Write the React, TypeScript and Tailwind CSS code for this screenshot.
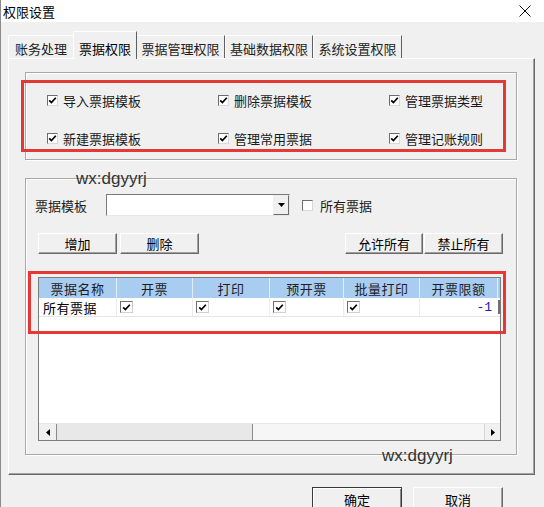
import React from 'react'

function CheckBox({ checked }: { checked: boolean }) {
  return (
    <span className="flex h-[11px] w-[11px] shrink-0 items-center justify-center border border-t-[#6d6d6d] border-l-[#6d6d6d] border-r-[#d8d8d8] border-b-[#d8d8d8] bg-white">
      {checked && (
        <svg width="9" height="9" viewBox="0 0 9 9">
          <path d="M1.2 4.3 L3.4 6.6 L7.8 1.8" fill="none" stroke="#000" strokeWidth="1.7" />
        </svg>
      )}
    </span>
  )
}

function Button({ label, className }: { label: string; className: string }) {
  return (
    <div
      className={`flex items-center justify-center border border-t-white border-l-white border-r-[#6a6a6a] border-b-[#6a6a6a] bg-[#f0f0f0] text-[13px] text-black shadow-[inset_-1px_-1px_0_#a0a0a0] ${className}`}
    >
      {label}
    </div>
  )
}

const headers = [
  { label: '票据名称', w: 'w-[78px]' },
  { label: '开票', w: 'w-[76px]' },
  { label: '打印', w: 'w-[77px]' },
  { label: '预开票', w: 'w-[74px]' },
  { label: '批量打印', w: 'w-[76px]' },
  { label: '开票限额', w: 'w-[78px]' },
]

const perms = ['导入票据模板', '删除票据模板', '管理票据类型', '新建票据模板', '管理常用票据', '管理记账规则']

export default function App() {
  return (
    <div className="relative h-[507px] w-[544px] overflow-hidden border-l border-[#8c8c8c] bg-[#f0f0f0] font-['Noto_Sans_CJK_SC',sans-serif] text-[13px] leading-none text-black">
      {/* title bar */}
      <div className="flex h-[22px] items-center justify-between bg-white pl-[2px] pr-[13px]">
        <span className="text-[13px]">权限设置</span>
        <svg width="12" height="12" viewBox="0 0 12 12">
          <path d="M0.5 0.5 L11.5 11.5 M11.5 0.5 L0.5 11.5" stroke="#111" strokeWidth="1" />
        </svg>
      </div>

      {/* tabs */}
      <div className="flex h-[36px] items-end pl-[7px]">
        <div className="flex h-[23px] w-[65px] items-center justify-center border-l border-t border-white pt-[2px] text-[#222]">账务处理</div>
        <div className="relative z-10 -mb-px flex h-[28px] w-[64px] items-center justify-center border-l border-t border-white border-r border-r-[#5f5f5f] bg-[#f0f0f0] pt-[6px]">票据权限</div>
        <div className="flex h-[23px] w-[88px] items-center justify-center border-t border-white border-r border-r-[#5f5f5f] pt-[2px] text-[#222]">票据管理权限</div>
        <div className="flex h-[23px] w-[88px] items-center justify-center border-l border-t border-white border-r border-r-[#5f5f5f] pt-[2px] text-[#222]">基础数据权限</div>
        <div className="flex h-[23px] w-[89px] items-center justify-center border-l border-t border-white border-r border-r-[#5f5f5f] pt-[2px] text-[#222]">系统设置权限</div>
      </div>

      {/* tab panel */}
      <div className="ml-[7px] h-[417px] w-[527px] border-l border-t border-white border-r border-b border-r-[#6a6a6a] border-b-[#6a6a6a] pl-[16px] pt-[13px] shadow-[inset_-1px_-1px_0_#a0a0a0]">
        {/* permissions group */}
        <div className="h-[88px] w-[492px] border border-[#a8a8a8] shadow-[inset_1px_1px_0_#fff,1px_1px_0_#fff]">
          <div className="grid grid-cols-[171px_171px_1fr] gap-y-[18px] pl-[21px] pt-[17px]">
            {perms.map((p) => (
              <div key={p} className="flex h-[20px] items-center gap-[5px] text-[#1a1a1a]">
                <CheckBox checked />
                <span>{p}</span>
              </div>
            ))}
          </div>
        </div>

        {/* template group */}
        <div className="relative mt-[18px] h-[277px] w-[492px] border border-[#a8a8a8] shadow-[inset_1px_1px_0_#fff,1px_1px_0_#fff]">
          <div className="flex h-[22px] items-center pl-[9px] mt-[15px]">
            <span className="w-[71px] text-[#1a1a1a]">票据模板</span>
            <div className="flex h-[22px] w-[184px] border border-t-[#7a7a7a] border-l-[#7a7a7a] border-r-[#e6e6e6] border-b-[#e6e6e6] bg-white">
              <div className="flex-1" />
              <div className="flex w-[16px] items-center justify-center border border-t-[#f0f0f0] border-l-[#f0f0f0] border-r-[#6a6a6a] border-b-[#6a6a6a] bg-[#f0f0f0]">
                <svg width="7" height="4" viewBox="0 0 7 4">
                  <path d="M0 0 H7 L3.5 4 Z" fill="#000" />
                </svg>
              </div>
            </div>
            <div className="ml-[12px] flex items-center gap-[7px]">
              <CheckBox checked={false} />
              <span className="text-[#1a1a1a]">所有票据</span>
            </div>
          </div>

          <div className="mt-[17px] flex h-[21px] justify-between pl-[12px] pr-[13px]">
            <div className="flex gap-[3px]">
              <Button label="增加" className="h-[21px] w-[79px]" />
              <Button label="删除" className="h-[21px] w-[79px]" />
            </div>
            <div className="flex gap-[1px]">
              <Button label="允许所有" className="h-[21px] w-[78px]" />
              <Button label="禁止所有" className="h-[21px] w-[79px]" />
            </div>
          </div>

          {/* list */}
          <div className="ml-[12px] mt-[23px] flex h-[164px] w-[463px] flex-col border border-[#7c7c7c] bg-white">
            <div className="flex h-[20px] bg-[#a9cdf0]">
              {headers.map((h) => (
                <div key={h.label} className={`flex shrink-0 items-center justify-center border-r border-[#e4eefa] tracking-[0.5px] text-[#1c1c2c] ${h.w}`}>
                  {h.label}
                </div>
              ))}
              <div className="w-[2px] bg-[#a9cdf0]" />
            </div>
            <div className="flex h-[19px] border-b border-[#e6e6e6]">
              <div className="flex w-[78px] shrink-0 items-center border-r border-[#ececec] pl-[4px] tracking-[0.5px]">所有票据</div>
              {['w-[76px]', 'w-[77px]', 'w-[74px]', 'w-[76px]'].map((w) => (
                <div key={w} className={`flex shrink-0 items-center border-r border-[#ececec] pl-[3px] ${w}`}>
                  <span className="flex h-[12px] w-[13px] items-center justify-center border border-t-[#707070] border-l-[#707070] border-r-[#d0d0d0] border-b-[#d0d0d0] bg-white">
                    <svg width="9" height="9" viewBox="0 0 9 9">
                      <path d="M1.2 4.3 L3.4 6.6 L7.8 1.8" fill="none" stroke="#000" strokeWidth="1.7" />
                    </svg>
                  </span>
                </div>
              ))}
              <div className="flex w-[78px] shrink-0 items-center justify-end pr-[6px] font-['Liberation_Mono',monospace] text-[13px] text-[#2020c0]">-1</div>
              <div className="my-[2px] w-[2px] bg-[#707070]" />
            </div>
            <div className="flex-1" />
            <div className="flex h-[17px] border-t border-[#e8e8e8] bg-[#f6f6f6]">
              <div className="flex w-[18px] items-center justify-center border-r border-[#8a8a8a] bg-[#f0f0f0]">
                <svg width="4" height="7" viewBox="0 0 4 7">
                  <path d="M4 0 V7 L0 3.5 Z" fill="#000" />
                </svg>
              </div>
              <div className="w-[196px] border-r border-[#8a8a8a] bg-[#e8e8e8]" />
              <div className="flex-1" />
              <div className="flex w-[16px] items-center justify-center border-l border-[#d6d6d6] bg-[#f0f0f0]">
                <svg width="4" height="7" viewBox="0 0 4 7">
                  <path d="M0 0 V7 L4 3.5 Z" fill="#000" />
                </svg>
              </div>
            </div>
          </div>

          {/* watermarks */}
          <span className="absolute left-[50px] top-[-10px] font-['Liberation_Sans',sans-serif] text-[17px] leading-[20px] text-[#333]">wx:dgyyrj</span>
          <span className="absolute left-[356px] top-[267px] font-['Liberation_Sans',sans-serif] text-[17px] leading-[20px] text-[#333]">wx:dgyyrj</span>
        </div>
      </div>

      {/* dialog buttons */}
      <div className="mt-[12px] flex gap-[11px] pl-[311px]">
        <div className="flex h-[24px] w-[90px] items-center justify-center border border-[#3a3a3a] bg-[#f0f0f0] shadow-[inset_1px_1px_0_#fff,inset_-1px_-1px_0_#8a8a8a]">确定</div>
        <Button label="取消" className="h-[24px] w-[90px]" />
      </div>

      {/* red annotation boxes */}
      <div className="absolute left-[20px] top-[80px] h-[72px] w-[485px] border-[3px] border-[#e53935]" />
      <div className="absolute left-[27px] top-[271px] h-[63px] w-[478px] border-[3px] border-[#e53935]" />
    </div>
  )
}
